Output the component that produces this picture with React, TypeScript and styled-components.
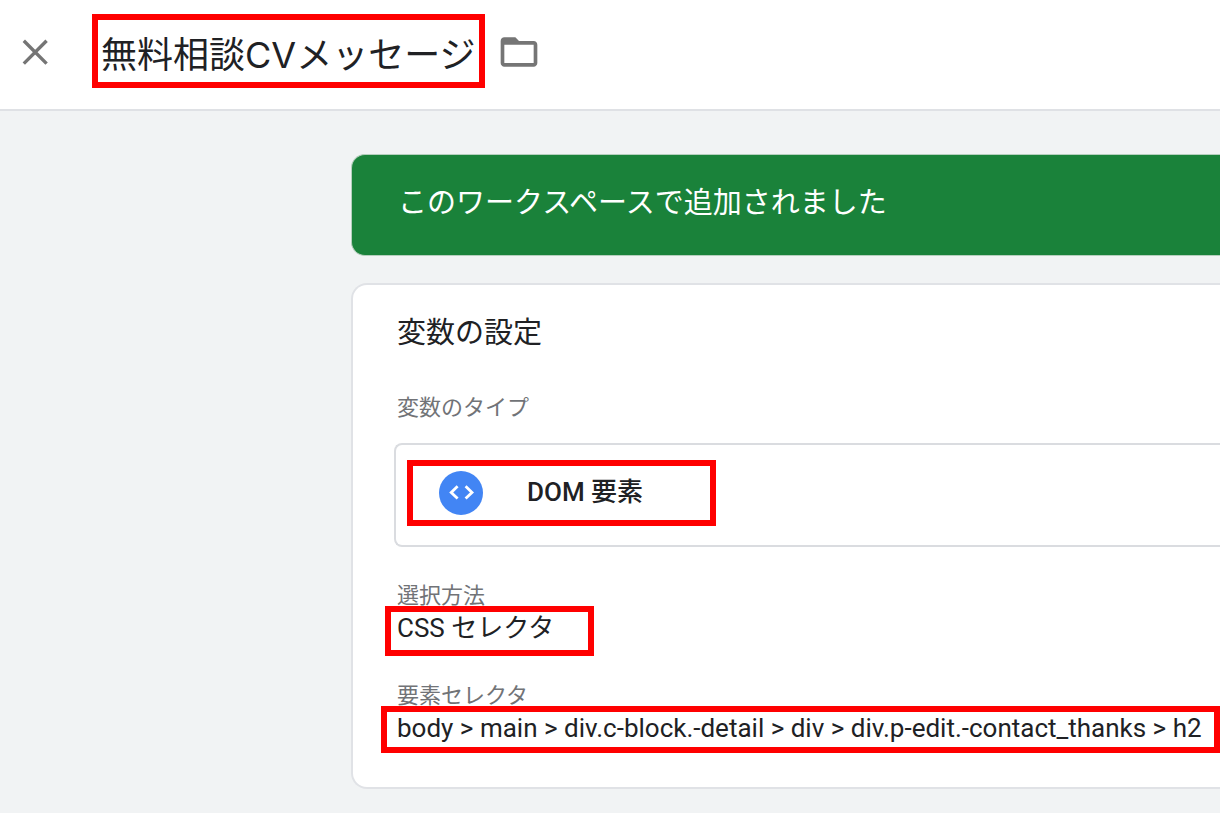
import React from "react";
import styled, { createGlobalStyle } from "styled-components";

const GlobalStyle = createGlobalStyle`
  *, *::before, *::after { box-sizing: border-box; }
  body {
    margin: 0;
    background: #f1f3f4;
    color: #202124;
    font-family: Roboto, "Noto Sans CJK JP", sans-serif;
  }
  h1, h2, p, dl, dd { margin: 0; }
`;

const Page = styled.div`
  min-height: 100vh;
  overflow-x: hidden;
`;

const Header = styled.header`
  display: flex;
  align-items: center;
  height: 111px;
  padding: 0 16px 7px;
  background: #fff;
  border-bottom: 2px solid #dfe1e5;
`;

const IconButton = styled.button`
  display: flex;
  padding: 2px 0 0;
  border: 0;
  background: none;
  color: #757575;
  cursor: pointer;
`;

const Highlight = styled.div`
  border: 6px solid #f00;
`;

const TitleFrame = styled(Highlight)`
  height: 74px;
  margin: 0 12px 0 38px;
  padding: 0 4px 0 3px;
`;

const Title = styled.h1`
  font: 400 36px/70px Inter, "Noto Sans CJK JP", sans-serif;
  white-space: nowrap;
`;

const Main = styled.main`
  display: flex;
  flex-direction: column;
  gap: 27px;
  padding: 43px 0 25px 351px;
`;

const Banner = styled.p`
  height: 102px;
  padding: 28px 46px;
  border: 1px solid #b5cfbd;
  border-right: 0;
  border-radius: 14px 0 0 14px;
  background: #1a823a;
  color: #fff;
  font-size: 29px;
  line-height: 40px;
`;

const Card = styled.section`
  padding: 28px 0 34px 44px;
  border: 2px solid #e0e2e6;
  border-right: 0;
  border-radius: 16px 0 0 16px;
  background: #fff;
`;

const CardTitle = styled.h2`
  font-size: 29px;
  font-weight: 400;
  line-height: 40px;
`;

const Label = styled.dt`
  margin-bottom: -1px;
  color: #717377;
  font-size: 22px;
  line-height: 22px;
`;

const TypeSection = styled.dl`
  margin-top: 44px;
`;

const TypeBox = styled.div`
  height: 104px;
  margin: 25px 0 0 -3px;
  padding: 15px 11px;
  border: 2px solid #dadce0;
  border-right: 0;
  border-radius: 8px 0 0 8px;
`;

const TypeFrame = styled(Highlight)`
  display: flex;
  align-items: center;
  gap: 44px;
  width: 309px;
  height: 66px;
  padding-left: 26px;
`;

const TypeName = styled.span`
  padding-bottom: 2px;
  font-size: 26px;
  font-weight: 500;
  line-height: 32px;
`;

const Fields = styled.dl`
  display: flex;
  flex-direction: column;
  gap: 29px;
  margin-top: 38px;
`;

const ValueFrame = styled(Highlight)<{ $outset: number; $width?: number; $height: number }>`
  width: ${(p) => (p.$width ? `${p.$width}px` : "auto")};
  height: ${(p) => p.$height}px;
  margin-left: -${(p) => p.$outset}px;
  padding-left: ${(p) => p.$outset - 6}px;
  font-size: 26px;
  line-height: 32px;
  white-space: nowrap;
`;

function CloseIcon() {
  return (
    <svg width="38" height="38" viewBox="0 0 38 38" fill="none" stroke="currentColor" strokeWidth="3.4" aria-hidden="true">
      <path d="M7.8 7.8 30.6 30.6M30.6 7.8 7.8 30.6" />
    </svg>
  );
}

function FolderIcon() {
  return (
    <svg width="44" height="44" viewBox="0 0 24 24" fill="currentColor" aria-hidden="true">
      <path d="M20 6h-8l-2-2H4c-1.1 0-2 .9-2 2v12c0 1.1.9 2 2 2h16c1.1 0 2-.9 2-2V8c0-1.1-.9-2-2-2zm0 12H4V8h16v10z" />
    </svg>
  );
}

function CodeBadge() {
  return (
    <svg width="44" height="44" viewBox="0 0 44 44" fill="none" aria-hidden="true">
      <circle cx="22" cy="22" r="22" fill="#4285f4" />
      <path d="M18.6 15.2 12.2 21.4 18.6 27.6M26.6 15.2 33 21.4 26.6 27.6" stroke="#fff" strokeWidth="2.8" />
    </svg>
  );
}

export default function App() {
  return (
    <>
      <GlobalStyle />
      <Page>
        <Header>
          <IconButton type="button" aria-label="閉じる">
            <CloseIcon />
          </IconButton>
          <TitleFrame>
            <Title>無料相談CVメッセージ</Title>
          </TitleFrame>
          <IconButton type="button" aria-label="フォルダ">
            <FolderIcon />
          </IconButton>
        </Header>
        <Main>
          <Banner>このワークスペースで追加されました</Banner>
          <Card>
            <CardTitle>変数の設定</CardTitle>
            <TypeSection>
              <Label>変数のタイプ</Label>
              <dd>
                <TypeBox>
                  <TypeFrame>
                    <CodeBadge />
                    <TypeName>DOM 要素</TypeName>
                  </TypeFrame>
                </TypeBox>
              </dd>
            </TypeSection>
            <Fields>
              <div>
                <Label>選択方法</Label>
                <dd>
                  <ValueFrame $outset={12} $width={209} $height={50}>
                    CSS セレクタ
                  </ValueFrame>
                </dd>
              </div>
              <div>
                <Label>要素セレクタ</Label>
                <dd>
                  <ValueFrame $outset={16} $height={47}>
                    body &gt; main &gt; div.c-block.-detail &gt; div &gt; div.p-edit.-contact_thanks &gt; h2
                  </ValueFrame>
                </dd>
              </div>
            </Fields>
          </Card>
        </Main>
      </Page>
    </>
  );
}
